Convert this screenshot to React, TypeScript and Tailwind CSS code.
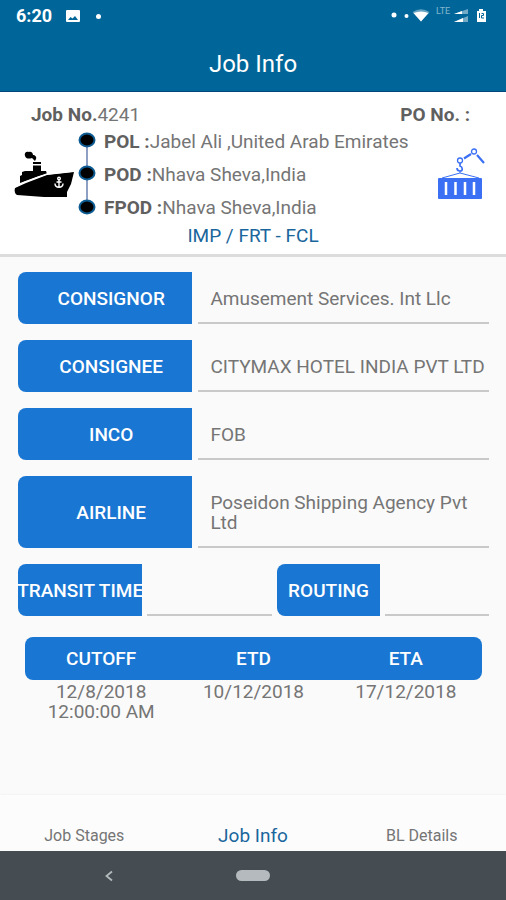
import { useId } from "react";

const route = [
  { code: "POL :", place: "Jabel Ali ,United Arab Emirates" },
  { code: "POD :", place: "Nhava Sheva,India" },
  { code: "FPOD :", place: "Nhava Sheva,India" },
];

const parties = [
  { label: "CONSIGNOR", value: "Amusement Services. Int Llc" },
  { label: "CONSIGNEE", value: "CITYMAX HOTEL INDIA PVT LTD" },
  { label: "INCO", value: "FOB" },
  { label: "AIRLINE", value: "Poseidon Shipping Agency Pvt Ltd", multiline: true },
];

const schedule = [
  { label: "CUTOFF", value: "12/8/2018 12:00:00 AM" },
  { label: "ETD", value: "10/12/2018" },
  { label: "ETA", value: "17/12/2018" },
];

function StatusBar() {
  return (
    <div className="flex h-8 items-center justify-between pr-3 pl-4 text-white">
      <div className="flex items-center">
        <span className="text-lg leading-8 font-bold">6:20</span>
        <svg className="ml-3.5 h-3 w-3.5" viewBox="0 0 14 12" aria-hidden="true">
          <rect width="14" height="12" rx="1" fill="#fff" />
          <path d="M2 10l2.500-3 2 1.500L9 6l3 4z" fill="#006699" />
        </svg>
        <span className="ml-4 size-[5px] rounded-full bg-white" />
      </div>
      <svg className="h-5 w-[104px]" viewBox="0 0 104 20" aria-hidden="true">
        <circle cx="4" cy="9" r="2.500" fill="#fff" />
        <circle cx="16.500" cy="10" r="2" fill="#fff" />
        <path d="M22.500 6Q31 .5 39.500 6L31 15.500z" fill="#fff" opacity=".4" />
        <path d="M23.500 7Q31 4 38.500 7L31 15.500z" fill="#fff" />
        <text x="46" y="8" fontSize="9" fill="#fff" opacity=".5" fontFamily="Roboto, sans-serif">LTE</text>
        <path d="M64 8L78 3v5z" fill="#fff" opacity=".45" />
        <path d="M64 8l8-3v3zM64 16l9-4v4z" fill="#fff" />
        <path d="M64 16l14-6v6z" fill="#fff" opacity=".45" />
        <path d="M87 5h2V3h4v2h3v11h-9z" fill="#fff" />
        <path d="M89.500 7v5M91.500 7.500h2v2h-2v2.500h2.500" stroke="#006699" strokeWidth="1" fill="none" />
      </svg>
    </div>
  );
}

function ShipIcon() {
  return (
    <svg className="h-12 w-[62px]" viewBox="0 0 62 48" aria-hidden="true">
      <path d="M11 5c-1-3 1-5 4-4 2-1 4 1 4 3 2 0 4 2 3 4l-1 2-3-3c-3 1-6 1-7-2z" fill="#000" />
      <path d="M19 11h8v2h-8zM19 14.500h8V21h-8z" fill="#000" />
      <path d="M6 32v-7l2-1v-3l3-1h21l1 3-8 2z" fill="#000" />
      <path d="M1 37l11-5 21-8 27-3-3 12-4 8v5H30L3 44c-2-1-3-4-2-7z" fill="#000" />
      <path d="M1 36l10-5 22-8 27-3" stroke="#fff" strokeWidth="1.300" fill="none" />
      <g stroke="#fff" strokeWidth="1.400" fill="none">
        <circle cx="45" cy="27.500" r="1.300" />
        <path d="M45 29v7M42.500 31h5M41 32.500c0 5 8 5 8 0" />
      </g>
    </svg>
  );
}

function ContainerIcon() {
  return (
    <svg className="h-[53px] w-12" viewBox="0 0 48 53" aria-hidden="true">
      <g stroke="#3b70f5" fill="none">
        <circle cx="36" cy="4.500" r="2.500" strokeWidth="1.300" />
        <circle cx="22" cy="13.500" r="2.500" strokeWidth="1.300" />
        <path d="M26 11.500l7-4.500M39 8l7 8" strokeWidth="2.200" />
        <path d="M22 16v3c3 1 3 5 0 5-2 0-3-1-3-3" strokeWidth="1.700" />
        <path d="M22 24v2L4 31M22 26l19 5" strokeWidth="1" />
      </g>
      <rect y="31" width="44" height="21" rx="1" fill="#3b70f5" />
      <path d="M8 35v13M17.500 35v13M27 35v13M36 35v13" stroke="#fff" strokeWidth="2.500" />
    </svg>
  );
}

function RouteLine() {
  return (
    <svg className="h-full w-[18px]" viewBox="0 0 18 99" aria-hidden="true">
      <path d="M9 16v66" stroke="#8e9fc4" strokeWidth="2" />
      {[15, 48, 82].map((y) => (
        <ellipse key={y} cx="9" cy={y} rx="7.500" ry="6.500" fill="#000" stroke="#0d5c94" strokeWidth="2" />
      ))}
    </svg>
  );
}

const labelClass =
  "flex items-center justify-center rounded-l-lg bg-[#1976d2] pt-0.5 font-medium whitespace-nowrap text-white";
const fieldClass = "w-full min-w-0 border-b-2 border-[#c9c9c9] bg-transparent outline-none";

function PartyField({ label, value, multiline }: { label: string; value: string; multiline?: boolean }) {
  const id = useId();
  return (
    <div className="grid grid-cols-[3fr_5fr] gap-1.5">
      <label htmlFor={id} className={`${labelClass} pl-3`}>
        {label}
      </label>
      {multiline ? (
        <textarea id={id} readOnly rows={2} defaultValue={value} className={`${fieldClass} h-[72px] resize-none overflow-hidden pt-[17px] pr-3 pl-3 leading-5`} />
      ) : (
        <input id={id} readOnly defaultValue={value} className={`${fieldClass} h-[52px] pt-0.5 pl-3`} />
      )}
    </div>
  );
}

export default function App() {
  return (
    <div className="flex min-h-screen flex-col bg-[#fafafa] font-[Roboto,sans-serif] text-[19px] text-[#757575]">
      <header className="border-b border-[#00487c] bg-[#006699]">
        <StatusBar />
        <h1 className="pt-4 pb-2.5 text-center text-2xl leading-[33px] text-white">Job Info</h1>
      </header>

      <section className="border-b-[3px] border-[#dcdcdc] bg-white pt-3 pb-2">
        <div className="flex justify-between pr-9 pl-[31px] leading-[21px]">
          <p>
            <b className="font-bold text-[#606060]">Job No.</b>4241
          </p>
          <p className="font-bold text-[#606060]">PO No. :</p>
        </div>
        <div className="flex pr-5 pl-3.5">
          <div className="flex items-center">
            <ShipIcon />
          </div>
          <div className="ml-0.5">
            <RouteLine />
          </div>
          <ol className="ml-2 flex-1">
            {route.map((stop) => (
              <li key={stop.code} className="leading-[33px] whitespace-nowrap">
                <b className="font-bold text-[#606060]">{stop.code}</b>
                {stop.place}
              </li>
            ))}
          </ol>
          <div className="flex items-center pb-0.5">
            <ContainerIcon />
          </div>
        </div>
        <p className="pt-px text-center leading-[21px] text-[#1a669c]">IMP / FRT - FCL</p>
      </section>

      <main className="flex-1 pt-[15px] pr-[17px] pb-6 pl-[18px]">
        <form className="flex flex-col gap-4">
          {parties.map((party) => (
            <PartyField key={party.label} {...party} />
          ))}
          <div className="grid h-[52px] grid-cols-[6fr_6fr_5fr_5fr] gap-[5px]">
            <label htmlFor="transit" className={`${labelClass} min-w-0`}>
              TRANSIT TIME
            </label>
            <input id="transit" readOnly className={fieldClass} />
            <label htmlFor="routing" className={labelClass}>
              ROUTING
            </label>
            <input id="routing" readOnly className={fieldClass} />
          </div>
        </form>

        <div className="mt-[21px] px-[7px]">
          <table className="w-full table-fixed border-separate border-spacing-0 text-center">
            <thead>
              <tr>
                {schedule.map(({ label }) => (
                  <th key={label} className="h-[43px] bg-[#1976d2] pt-0.5 font-medium text-white first:rounded-l-lg last:rounded-r-lg">
                    {label}
                  </th>
                ))}
              </tr>
            </thead>
            <tbody>
              <tr>
                {schedule.map(({ label, value }) => (
                  <td key={label} className="px-4 pt-0.5 align-top leading-5">
                    {value}
                  </td>
                ))}
              </tr>
            </tbody>
          </table>
        </div>
      </main>

      <nav className="grid h-14 grid-cols-3 items-end bg-[#fcfcfc] pb-[3px] text-center shadow-[0_-1px_2px_rgba(0,0,0,0.03)]">
        <a href="#stages" className="text-base leading-6">Job Stages</a>
        <a href="#info" className="leading-6 text-[#1a669c]">Job Info</a>
        <a href="#bl" className="text-base leading-6">BL Details</a>
      </nav>

      <footer className="grid h-[49px] grid-cols-[1fr_34px_1fr] items-center bg-[#454d52]">
        <button type="button" aria-label="Back" className="ml-[105px] w-2 text-[#b4babd]">
          <svg className="h-3 w-2" viewBox="0 0 8 12" fill="none" aria-hidden="true">
            <path d="M7 1.500L1.500 6 7 10.500" stroke="currentColor" strokeWidth="1.800" />
          </svg>
        </button>
        <button type="button" aria-label="Home" className="h-[11px] rounded-full bg-[#b4babd]" />
      </footer>
    </div>
  );
}
